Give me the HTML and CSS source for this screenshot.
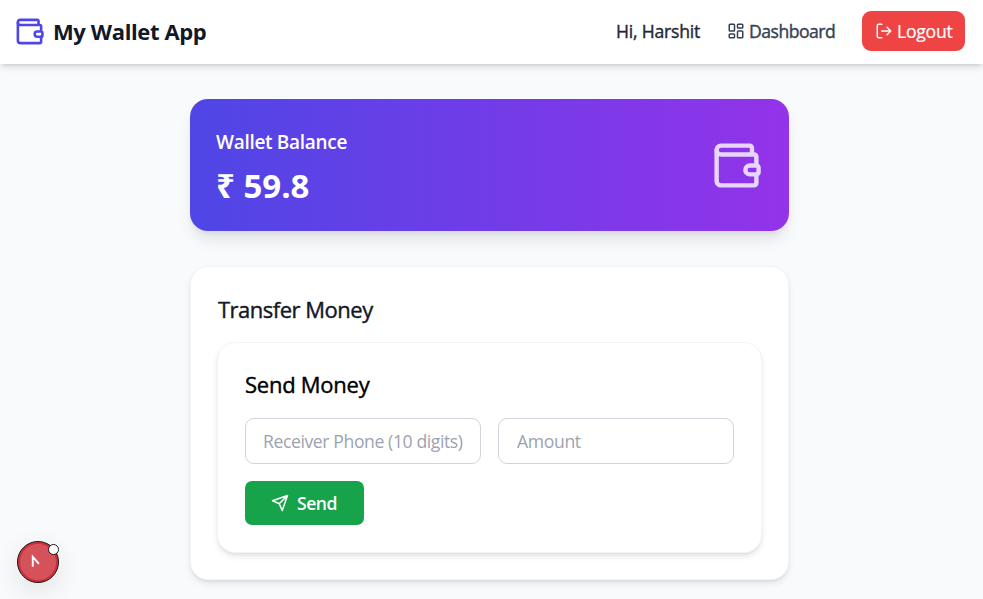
FILE: index.html
```html
<!DOCTYPE html>
<html lang="en">
<head>
<meta charset="utf-8">
<title>My Wallet App</title>
<link rel="stylesheet" href="styles.css">
</head>
<body>
<svg class="defs" aria-hidden="true">
  <symbol id="wallet" viewBox="0 0 24 24"><path d="M19 7V4a1 1 0 0 0-1-1H5a2 2 0 0 0 0 4h15a1 1 0 0 1 1 1v4h-3a2 2 0 0 0 0 4h3a1 1 0 0 0 1-1v-2a1 1 0 0 0-1-1"/><path d="M3 5v14a2 2 0 0 0 2 2h15a1 1 0 0 0 1-1v-4"/></symbol>
</svg>
<header class="navbar">
  <a class="brand"><svg class="icon brand-icon"><use href="#wallet"/></svg><span class="brand-name">My Wallet App</span></a>
  <nav class="nav">
    <span class="greeting">Hi, Harshit</span>
    <a class="dash"><svg class="icon dash-icon" viewBox="0 0 24 24"><rect x="3" y="3" width="7" height="9" rx="1"/><rect x="14" y="3" width="7" height="5" rx="1"/><rect x="14" y="12" width="7" height="9" rx="1"/><rect x="3" y="16" width="7" height="5" rx="1"/></svg><span class="dash-text">Dashboard</span></a>
    <button class="logout"><svg class="icon logout-icon" viewBox="0 0 24 24"><path d="m16 17 5-5-5-5M21 12H9M9 21H5a2 2 0 0 1-2-2V5a2 2 0 0 1 2-2h4"/></svg><span class="logout-text">Logout</span></button>
  </nav>
</header>
<main class="content">
  <section class="balance">
    <div><p class="balance-label"><span>Wallet Balance</span></p><p class="balance-value"><span>₹ 59.8</span></p></div>
    <svg class="icon balance-icon"><use href="#wallet"/></svg>
  </section>
  <section class="card transfer">
    <h2 class="title transfer-title"><span>Transfer Money</span></h2>
    <form class="card send-form">
      <h3 class="title send-title"><span>Send Money</span></h3>
      <div class="fields">
        <input class="field phone" placeholder="Receiver Phone (10 digits)">
        <input class="field amount" placeholder="Amount">
      </div>
      <button class="send" type="button"><svg class="icon send-icon" viewBox="0 0 24 24"><path d="m22 2-7 20-4-9-9-4ZM22 2 11 13"/></svg><span class="send-text">Send</span></button>
    </form>
  </section>
</main>
<div class="badge"><svg class="badge-mark" viewBox="0 0 42 42"><path d="M15.500 26V15.500L22 23"/></svg><span class="badge-dot"></span></div>
</body>
</html>
```
FILE: styles.css
```css
* { box-sizing: border-box; margin: 0; }
body { height: 599px; overflow: hidden; background: #f9fafb; font-family: "Open Sans", "Noto Sans", sans-serif; font-size: 17.600px; color: #111827; }
.defs { position: absolute; width: 0; height: 0; }
.icon { fill: none; stroke: currentColor; stroke-width: 2; stroke-linecap: round; stroke-linejoin: round; flex: none; }
span { white-space: nowrap; }
button { border: 0; font: inherit; color: #fff; }
.navbar { height: 64px; background: #fff; display: flex; align-items: center; justify-content: space-between; padding: 0 18px 2px 14px; box-shadow: 0 4px 7px -1px rgba(0,0,0,.13), 0 2px 4px -2px rgba(0,0,0,.13); }
.brand { display: flex; align-items: center; gap: 8px; }
.brand-icon { width: 31px; height: 31px; color: #4f46e5; }
.brand-name { font-size: 22px; font-weight: 700; line-height: 31px; letter-spacing: -.38px; }
.nav { display: flex; align-items: center; }
.greeting, .dash-text, .title { -webkit-text-stroke: .4px currentColor; }
.greeting { color: #1f2937; width: 85px; margin-right: 26px; letter-spacing: -.2px; }
.dash { display: flex; align-items: center; color: #374151; gap: 4px; width: 135px; }
.dash-text { letter-spacing: -.5px; }
.dash-icon { width: 18px; height: 18px; }
.logout { display: flex; align-items: center; gap: 4px; width: 103px; height: 40px; border-radius: 9px; background: #ef4444; padding: 0 13px; }
.logout-icon { width: 18px; height: 18px; }
.logout-text { letter-spacing: -.25px; -webkit-text-stroke: .2px currentColor; }
.content { width: 599px; margin: 35px 0 0 190px; }
.balance { height: 132px; border-radius: 18px; background: linear-gradient(90deg, #4f46e5, #9333ea); color: #fff; display: flex; align-items: center; justify-content: space-between; padding: 0 26px; box-shadow: 0 11px 16px -3px rgba(0,0,0,.1), 0 4px 7px -4px rgba(0,0,0,.1); }
.balance-label { font-size: 19px; font-weight: 600; line-height: 30px; letter-spacing: -.3px; padding-top: 2px; }
.balance-value { font-size: 33px; font-weight: 700; line-height: 40px; margin-top: 9px; }
.balance-icon { width: 53px; height: 53px; opacity: .8; }
.card { background: #fff; border: 1px solid #f3f4f6; border-radius: 18px; box-shadow: 0 4px 7px -1px rgba(0,0,0,.1), 0 2px 4px -2px rgba(0,0,0,.1); }
.transfer { margin-top: 35px; height: 314px; padding: 27px 26px; }
.title { font-size: 22px; line-height: 31px; font-weight: 400; letter-spacing: -.5px; }
.transfer-title { margin-bottom: 17px; padding-left: 1px; }
.send-form { height: 211px; padding: 26px 27px; }
.send-title { color: #000; margin-bottom: 18px; letter-spacing: -.25px; }
.fields { display: grid; grid-template-columns: 1fr 1fr; gap: 17px; }
.field { width: 100%; height: 46px; border: 1px solid #d1d5db; border-radius: 9px; padding: 0 17px; font: inherit; background: #fff; }
.field::placeholder { color: #9ca3af; opacity: 1; }
.phone { letter-spacing: -.4px; }
.amount { padding-left: 18px; letter-spacing: -.35px; }
.send { margin-top: 17px; width: 119px; height: 44px; border-radius: 7px; background: #16a34a; font-weight: 600; display: flex; align-items: center; padding: 0 26px; gap: 8px; }
.send-text { letter-spacing: -.5px; }
.send-icon { width: 18px; height: 18px; }
.badge { position: fixed; left: 17px; top: 541px; width: 42px; height: 42px; border-radius: 50%; background: #d6525a; border: 1px solid #171717; box-shadow: inset 0 0 0 2px #cc2d38, 0 8px 26px rgba(0,0,0,.1); }
.badge-mark { width: 40px; height: 40px; display: block; fill: none; stroke: #fff; stroke-width: 2; }
.badge-dot { position: absolute; top: 2px; right: -1px; width: 11px; height: 11px; border-radius: 50%; background: #fff; border: 1px solid #171717; }
```
